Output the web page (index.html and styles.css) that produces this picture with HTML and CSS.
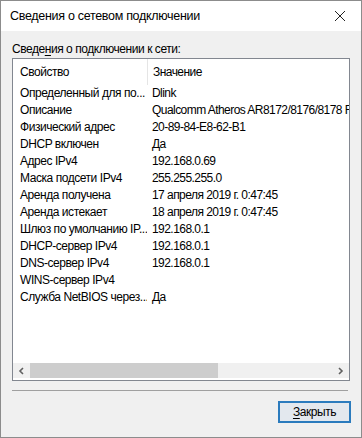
FILE: index.html
```html
<!DOCTYPE html>
<html lang="ru">
<head>
    <meta charset="UTF-8">
    <title>Сведения о сетевом подключении</title>
    <link rel="stylesheet" href="styles.css">
</head>
<body>
    <div class="window">
        <div class="titlebar">
            <span class="title">Сведения о сетевом подключении</span>
            <svg class="close" width="12" height="12" viewBox="0 0 12 12">
                <path d="M1 1 L11 11 M11 1 L1 11" stroke="#222" stroke-width="1" fill="none"/>
            </svg>
        </div>
        <div class="content">
            <div class="label">Сведе<u>н</u>ия о подключении к сети:</div>
            <div class="listbox">
                <div class="list">
                    <div class="row header">
                        <div class="cell name">Свойство</div>
                        <div class="cell value">Значение</div>
                    </div>
                    <div class="row"><div class="cell name">Определенный для по...</div><div class="cell value">Dlink</div></div>
                    <div class="row"><div class="cell name">Описание</div><div class="cell value">Qualcomm Atheros AR8172/8176/8178 F</div></div>
                    <div class="row"><div class="cell name">Физический адрес</div><div class="cell value">20-89-84-E8-62-B1</div></div>
                    <div class="row"><div class="cell name">DHCP включен</div><div class="cell value">Да</div></div>
                    <div class="row"><div class="cell name">Адрес IPv4</div><div class="cell value">192.168.0.69</div></div>
                    <div class="row"><div class="cell name">Маска подсети IPv4</div><div class="cell value">255.255.255.0</div></div>
                    <div class="row"><div class="cell name">Аренда получена</div><div class="cell value">17 апреля 2019 г. 0:47:45</div></div>
                    <div class="row"><div class="cell name">Аренда истекает</div><div class="cell value">18 апреля 2019 г. 0:47:45</div></div>
                    <div class="row"><div class="cell name">Шлюз по умолчанию IP...</div><div class="cell value">192.168.0.1</div></div>
                    <div class="row"><div class="cell name">DHCP-сервер IPv4</div><div class="cell value">192.168.0.1</div></div>
                    <div class="row"><div class="cell name">DNS-сервер IPv4</div><div class="cell value">192.168.0.1</div></div>
                    <div class="row"><div class="cell name">WINS-сервер IPv4</div><div class="cell value"></div></div>
                    <div class="row"><div class="cell name">Служба NetBIOS через...</div><div class="cell value">Да</div></div>
                </div>
                <div class="hscroll">
                    <svg class="arrow" width="8" height="8" viewBox="0 0 8 8">
                        <path d="M5.5 1 L2.5 4 L5.5 7" stroke="#606060" stroke-width="1.6" fill="none"/>
                    </svg>
                    <div class="track"><div class="thumb"></div></div>
                    <svg class="arrow" width="8" height="8" viewBox="0 0 8 8">
                        <path d="M2.5 1 L5.5 4 L2.5 7" stroke="#606060" stroke-width="1.6" fill="none"/>
                    </svg>
                </div>
            </div>
            <div class="separator"></div>
            <div class="buttons">
                <button class="btn"><u>З</u>акрыть</button>
            </div>
        </div>
    </div>
</body>
</html>
```

FILE: styles.css
```css
body {
    margin: 0;
    font-family: 'Liberation Sans', Arial, sans-serif;
    font-size: 12px;
    letter-spacing: -0.45px;
    color: #000;
}

.window {
    width: 362px;
    height: 438px;
    box-sizing: border-box;
    border: 1px solid #8c8c8c;
    background-color: #f0f0f0;
    display: flex;
    flex-direction: column;
}

.titlebar {
    height: 30px;
    background-color: #fff;
    display: flex;
    align-items: center;
    justify-content: space-between;
    padding: 0 15px 0 9px;
}

.title {
    font-size: 12.5px;
    letter-spacing: -0.3px;
}

.content {
    flex: 1;
    display: flex;
    flex-direction: column;
    padding: 10px 11px 0 11px;
}

.label {
    line-height: 17px;
    margin-bottom: 0;
}

.label u,
.btn u {
    text-decoration-thickness: 1px;
    text-underline-offset: 2px;
}

.listbox {
    height: 323px;
    box-sizing: border-box;
    border: 1px solid #828790;
    background-color: #fff;
    display: flex;
    flex-direction: column;
}

.list {
    flex: 1;
    overflow: hidden;
}

.row {
    display: flex;
    height: 17px;
    line-height: 17px;
}

.row.header {
    height: 26px;
    line-height: 26px;
}

.cell {
    white-space: nowrap;
    overflow: hidden;
}

.name {
    width: 127px;
    padding-left: 7px;
    flex-shrink: 0;
}

.header .name {
    border-right: 1px solid #e5e5e5;
}

.value {
    padding-left: 5px;
    flex: 1;
    letter-spacing: -0.55px;
}

.hscroll {
    height: 15px;
    margin-bottom: 2px;
    background-color: #f0f0f0;
    display: flex;
    align-items: center;
}

.arrow {
    width: 17px;
    flex-shrink: 0;
}

.track {
    flex: 1;
    height: 15px;
}

.thumb {
    width: 188px;
    height: 15px;
    background-color: #cdcdcd;
}

.separator {
    height: 1px;
    background-color: #a0a0a0;
    margin: 9px 2px 0 0;
}

.buttons {
    display: flex;
    justify-content: flex-end;
    padding-top: 10px;
}

.btn {
    width: 73px;
    height: 22px;
    margin-right: -1px;
    font-family: inherit;
    font-size: 12px;
    letter-spacing: -0.45px;
    background-color: #e3e8ee;
    border: 2px solid #2b7bbd;
    padding: 0;
    color: #000;
}
```
